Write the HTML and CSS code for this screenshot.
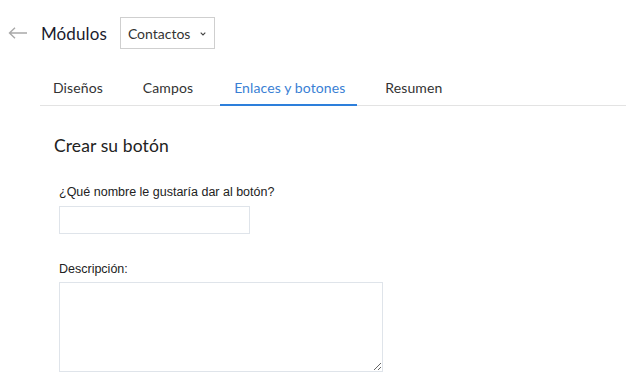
FILE: index.html
```html
<!DOCTYPE html>
<html lang="es">
<head>
<meta charset="utf-8">
<link rel="stylesheet" href="styles.css">
</head>
<body>
<div class="page">
  <header class="topbar">
    <svg class="back" width="20" height="12" viewBox="0 0 20 12"><path d="M19 6H1.5M7 0.8L1.5 6 7 11.2" fill="none" stroke="#a9a9a9" stroke-width="1.4"/></svg>
    <h1 class="title">Módulos</h1>
    <div class="select"><span>Contactos</span><svg width="6" height="4" viewBox="0 0 6 4"><path d="M0.7 0.7l2.3 2.3 2.3-2.3" fill="none" stroke="#444" stroke-width="1.1"/></svg></div>
  </header>
  <nav class="tabs">
    <a class="tab">Diseños</a>
    <a class="tab">Campos</a>
    <a class="tab active">Enlaces y botones</a>
    <a class="tab">Resumen</a>
  </nav>
  <section class="form">
    <h2 class="heading">Crear su botón</h2>
    <label class="label">¿Qué nombre le gustaría dar al botón?</label>
    <input class="input" type="text">
    <label class="label desc">Descripción:</label>
    <textarea class="textarea"></textarea>
  </section>
</div>
</body>
</html>
```
FILE: styles.css
```css
* { box-sizing: border-box; }
html, body { margin: 0; padding: 0; background: #fff; }
body { font-family: Lato, "Open Sans", sans-serif; color: #222; width: 626px; height: 392px; overflow: hidden; }
.topbar { display: flex; align-items: center; height: 66px; padding: 17px 0 17px 8px; }
.back { display: block; margin-top: -1px; }
.title { font-size: 17px; font-weight: 400; margin: 0 0 0 13px; color: #1b1b2e; letter-spacing: 0.1px; }
.select { margin-left: 13px; width: 95px; height: 32px; border: 1px solid #cfcfcf; display: flex; align-items: center; justify-content: space-between; padding: 0 8px 0 7px; font-size: 14px; color: #333; }
.select svg { display: block; margin-top: 2px; }
.tabs { display: flex; gap: 15px; margin-left: 40px; border-bottom: 1px solid #e3e3e3; height: 40px; }
.tab { font-size: 14px; color: #333; padding: 13px 13px 0 13px; margin-bottom: -1px; border-bottom: 2px solid transparent; letter-spacing: 0.1px; }
.tab:nth-child(2) { margin-left: -1px; margin-right: -1px; }
.tab.active { color: #3a7fd4; border-bottom-color: #2d7fdb; padding: 13px 12px 0 14px; letter-spacing: 0.1px; }
.form { padding: 0 0 0 54px; display: flex; flex-direction: column; align-items: flex-start; }
.heading { font-size: 17.5px; font-weight: 400; margin: 29px 0 0 0; color: #222; letter-spacing: 0.1px; line-height: 22px; }
.label { font-family: "Liberation Sans", Arial, sans-serif; font-size: 12.5px; color: #222; margin: 28px 0 0 5px; }
.input { margin: 7px 0 0 5px; width: 191px; height: 28px; border: 1px solid #dfe4ea; background: #fff; }
.desc { margin-top: 28px; }
.textarea { margin: 6px 0 0 5px; width: 324px; height: 90px; border: 1px solid #dfe4ea; resize: both; }
```
